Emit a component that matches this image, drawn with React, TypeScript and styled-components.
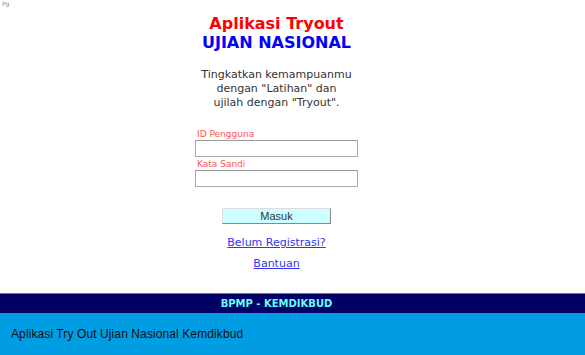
import React from "react";
import styled, { createGlobalStyle } from "styled-components";

const Global = createGlobalStyle`
  html, body { margin: 0; padding: 0; background: #fff; }
  body { font-family: "DejaVu Sans", Verdana, sans-serif; }
`;

const Page = styled.div`
  width: 585px;
  height: 355px;
  display: flex;
  flex-direction: column;
  overflow: hidden;
  position: relative;
`;

const Broken = styled.span`
  position: absolute;
  left: 2px;
  top: 0px;
  font-family: "DejaVu Sans", sans-serif;
  font-size: 6px;
  color: #888;
`;

const Main = styled.div`
  width: 553px;
  flex: 1;
  display: flex;
  flex-direction: column;
  align-items: center;
`;

const Intro = styled.div`
  display: flex;
  flex-direction: column;
  align-items: center;
  padding-top: 14px;
`;

const Title = styled.div<{ $color: string }>`
  font-family: "DejaVu Sans", Verdana, sans-serif;
  font-weight: bold;
  font-size: 16px;
  line-height: 19px;
  color: ${(p) => p.$color};
`;

const Lead = styled.p`
  margin: 16px 0 0;
  font-size: 11px;
  line-height: 14px;
  color: #333;
  text-align: center;
`;

const Form = styled.div`
  margin-top: 19px;
  display: flex;
  flex-direction: column;
  align-items: flex-start;
`;

const Label = styled.label`
  font-size: 9px;
  line-height: 11px;
  color: #ff5555;
  padding-left: 2px;
`;

const Input = styled.input`
  box-sizing: border-box;
  width: 163px;
  height: 17px;
  margin: 0 0 2px;
  border: 1px solid #aaa;
  border-top-color: #999;
  background: #fff;
`;

const Button = styled.button`
  margin-top: 19px;
  box-sizing: border-box;
  width: 109px;
  height: 16px;
  padding: 0;
  background: #ccffff;
  border: 1px solid #888;
  border-top-color: #ddd;
  border-left-color: #ddd;
  font-family: "Liberation Sans", Arial, sans-serif;
  font-size: 11px;
  color: #333;
`;

const Link = styled.a<{ $gap: number }>`
  margin-top: ${(p) => p.$gap}px;
  font-size: 11px;
  line-height: 13px;
  color: #3333ee;
  text-decoration: underline;
`;

const TopBar = styled.div`
  height: 19px;
  background: #000066;
  border-top: 1px solid #777;
  display: flex;
  align-items: center;
  justify-content: center;
  padding-right: 32px;
`;

const TopBarText = styled.span`
  font-family: "DejaVu Sans", Verdana, sans-serif;
  font-weight: bold;
  font-size: 10px;
  color: #66ffff;
`;

const BottomBar = styled.div`
  height: 42px;
  background: #009de3;
  display: flex;
  align-items: center;
  padding-left: 11px;
`;

const BottomText = styled.span`
  font-family: "Liberation Sans", Arial, sans-serif;
  font-size: 12px;
  letter-spacing: 0.1px;
  color: #111;
`;

export default function App() {
  return (
    <>
      <Global />
      <Page>
        <Broken>Pg</Broken>
        <Main>
          <Intro>
            <Title $color="#ff0000">Aplikasi Tryout</Title>
            <Title $color="#0000ff">UJIAN NASIONAL</Title>
            <Lead>
              Tingkatkan kemampuanmu
              <br />
              dengan "Latihan" dan
              <br />
              ujilah dengan "Tryout".
            </Lead>
          </Intro>
          <Form>
            <Label>ID Pengguna</Label>
            <Input type="text" />
            <Label>Kata Sandi</Label>
            <Input type="password" />
          </Form>
          <Button>Masuk</Button>
          <Link href="#" $gap={12}>Belum Registrasi?</Link>
          <Link href="#" $gap={8}>Bantuan</Link>
        </Main>
        <TopBar>
          <TopBarText>BPMP - KEMDIKBUD</TopBarText>
        </TopBar>
        <BottomBar>
          <BottomText>Aplikasi Try Out Ujian Nasional Kemdikbud</BottomText>
        </BottomBar>
      </Page>
    </>
  );
}
